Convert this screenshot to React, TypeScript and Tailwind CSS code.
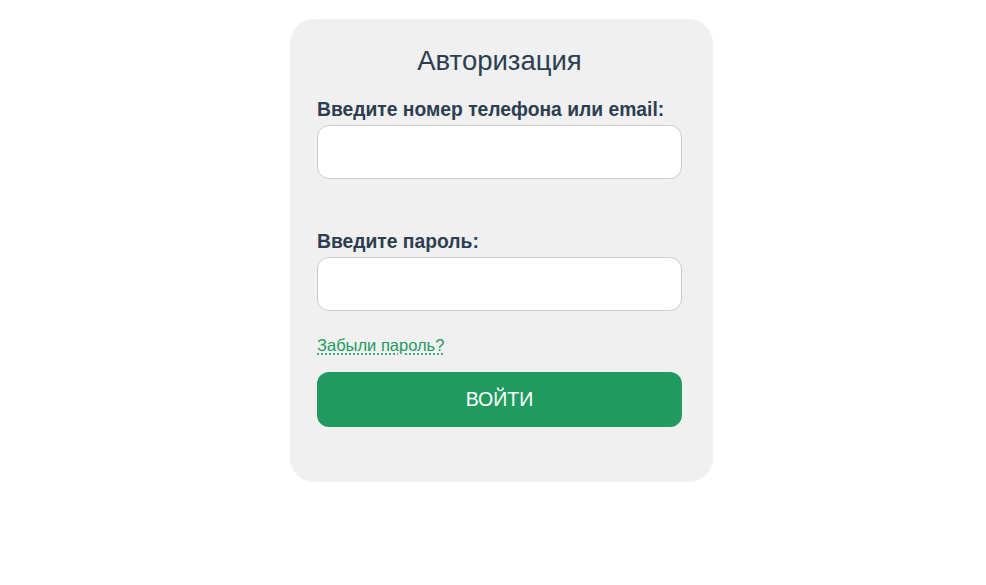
export default function App() {
  return (
    <div className="min-h-[585px] w-full bg-white pl-[17px] flex justify-center items-start" style={{ fontFamily: '"Liberation Sans", Arial, sans-serif' }}>
      <div className="mt-[19px] w-[423px] rounded-[24px] bg-[#f0f0f0] pl-[27px] pr-[31px] pt-[26px] pb-[55px] text-[#2c3e50]">
        <h1 className="text-center text-[27.5px] leading-[32px] font-normal">Авторизация</h1>
        <label className="block mt-[22px] mb-[4px] text-[19.3px] leading-[22px] font-bold">Введите номер телефона или email:</label>
        <input type="text" className="block w-full h-[54px] rounded-[12px] border border-[#cccccc] bg-white px-3 outline-none" />
        <label className="block mt-[52px] mb-[4px] text-[19.3px] leading-[22px] font-bold">Введите пароль:</label>
        <input type="password" className="block w-full h-[54px] rounded-[12px] border border-[#cccccc] bg-white px-3 outline-none" />
        <div className="mt-[25px] text-[16.5px] leading-[18px]">
          <a href="#" className="text-[#1f9b60] underline decoration-dotted decoration-[#1f9b60] underline-offset-[3px]">Забыли пароль?</a>
        </div>
        <button className="mt-[18px] block w-full h-[55px] rounded-[12px] bg-[#1f9b60] text-white text-[19.5px] uppercase">ВОЙТИ</button>
      </div>
    </div>
  );
}
